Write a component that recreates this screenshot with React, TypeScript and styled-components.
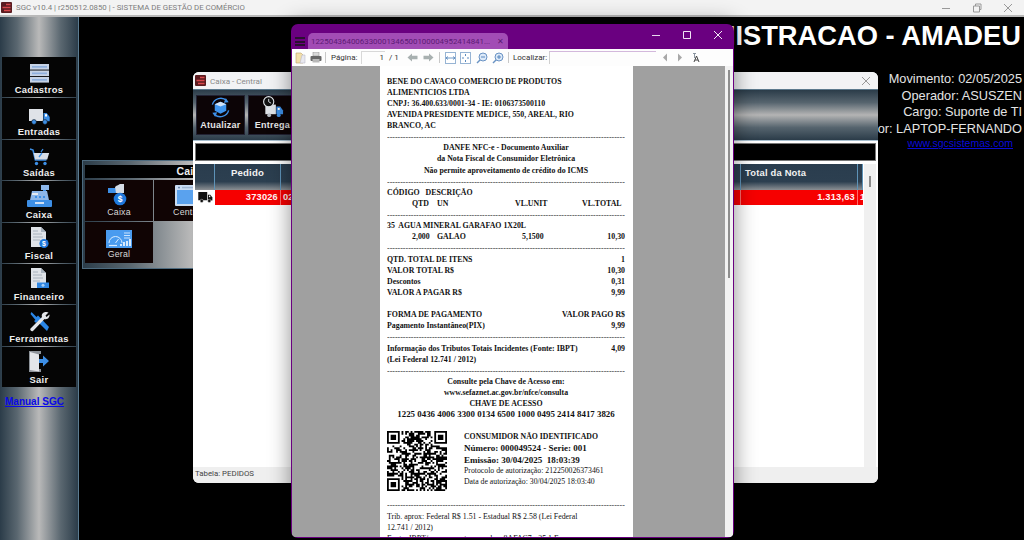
import React from "react";
import styled, { createGlobalStyle } from "styled-components";

const Global = createGlobalStyle`
  html, body { margin: 0; padding: 0; background: #000; overflow: hidden; }
  #root { width: 1024px; height: 540px; }
  * { box-sizing: border-box; }
`;

const UI = `Roboto, "Noto Sans", sans-serif`;
const ARIAL = `"Liberation Sans", Arial, sans-serif`;
const SERIF = `"Liberation Serif", "Times New Roman", serif`;
const METAL_H = `linear-gradient(90deg, #2b3c49 0%, #5a6770 22%, #b9b9b9 50%, #5a6770 78%, #2b3c49 100%)`;
const METAL_V = `linear-gradient(180deg, #2b3c49 0%, #56646e 25%, #b4b4b4 50%, #56646e 75%, #2b3c49 100%)`;
const LH = 11.13;

const Page = styled.div`
  width: 1024px; height: 540px; display: flex; flex-direction: column; overflow: hidden; background: #000;
`;
const AppBar = styled.header`
  height: 17px; flex: none; display: flex; align-items: center; gap: 4px; padding: 0 0 0 1px;
  background: #f3f3f3; border-bottom: 2px solid #b9b9b9;
`;
const AppTitle = styled.span`
  font: 7.85px ${UI}; color: #7c7c7c; flex: 1; white-space: nowrap;
`;
const Controls = styled.div`
  display: flex; align-items: center; gap: 21px; padding-right: 11px; height: 14px;
`;
const WinGlyph = styled.svg<{ $c: string }>`
  width: 10px; height: 10px; stroke: ${(p) => p.$c}; fill: none; stroke-width: 1; display: block;
`;
const Body = styled.div`
  flex: 1; display: flex; min-height: 0;
`;
const Sidebar = styled.nav`
  width: 79px; flex: none; padding: 40px 2px 0 2px; display: flex; flex-direction: column; gap: 1px;
  background: ${METAL_H}; border-right: 1px solid #5b7c92;
`;
const SideBtn = styled.div`
  height: 40.4px; flex: none; background: #050505; display: flex; flex-direction: column; align-items: center;
  justify-content: flex-end; gap: 1px; padding-bottom: 1px;
`;
const SideLabel = styled.span`
  font: bold 9.4px ${ARIAL}; color: #f0f0f0; letter-spacing: 0.3px; line-height: 12px;
`;
const ManualLink = styled.a`
  font: bold 10px ${ARIAL}; color: #0a0ae6; text-decoration: underline; margin: 8px 0 0 3px;
`;
const Desktop = styled.main`
  flex: 1; position: relative; min-width: 0; padding: 4px 2px 0 0; text-align: right; background: #000;
`;
const BigTitle = styled.h1`
  margin: 0 1px 0 0; font: bold 27.3px/30px ${ARIAL}; color: #fff; white-space: nowrap;
`;
const Info = styled.div`
  margin-top: 20px; font: 12.75px/16.6px ${ARIAL}; color: #e4e4e4; white-space: nowrap;
`;
const Site = styled.a`
  display: block; margin-right: 9px; font: 10.5px/13px ${ARIAL}; color: #0a0ad8; text-decoration: underline;
`;

/* Caixa menu panel */
const MenuPanel = styled.section`
  position: absolute; left: 3px; top: 143px; width: 218px; height: 109px; padding: 4px 2px 0;
  background: ${METAL_H}; border: 1px solid #4d6a7e; text-align: left;
`;
const MenuHead = styled.div`
  height: 13px; margin-bottom: 2px; background: #000; color: #eee; font: bold 10.5px/13px ${ARIAL};
  text-align: center; letter-spacing: 0.2px;
`;
const MenuGrid = styled.div`
  display: grid; grid-template-columns: 68px 68px; grid-auto-rows: 41px; gap: 1px;
`;
const MenuBtn = styled.div`
  background: #100404; display: flex; flex-direction: column; align-items: center; justify-content: flex-end;
  padding-bottom: 3px; gap: 1px;
`;
const MenuLabel = styled.span`
  font: 8.8px/11px ${ARIAL}; color: #d8d8d8; letter-spacing: 0.2px;
`;

/* Caixa window */
const CaixaWindow = styled.section`
  position: absolute; left: 114px; top: 55px; width: 685px; height: 411px; display: flex; flex-direction: column;
  background: #fff; border-radius: 6px; overflow: hidden; text-align: left;
`;
const CaixaBar = styled.div`
  height: 17px; flex: none; display: flex; align-items: center; gap: 4px; padding: 0 7px 0 2px; background: #f2f3f5;
`;
const CaixaTitle = styled.span`
  flex: 1; font: 8.1px ${UI}; color: #8a8a8a;
`;
const ToolRow = styled.div`
  height: 52px; flex: none; display: flex; gap: 3px; padding: 5px 3px; background: ${METAL_V}; border-bottom: 1px solid #a8c0d0; border-top: 1px solid #5c7a8e;
`;
const ToolBtn = styled.div`
  width: 49px; background: #0c0406; border: 1px solid #223; display: flex; flex-direction: column; align-items: center; justify-content: flex-end; padding-bottom: 3px; gap: 1px;
`;
const ToolLabel = styled.span`
  font: bold 9px/11px ${ARIAL}; color: #e6e6e6; letter-spacing: 0.25px; white-space: nowrap;
`;
const Strip = styled.div`
  height: 18px; flex: none; margin: 2px 2px 3px; background: #000; border: 1px solid #777;
`;
const GridArea = styled.div`
  flex: 1; min-height: 0; display: flex; padding: 0 2px; background: #fff;
`;
const Table = styled.div`
  flex: 1; min-width: 0; display: flex; flex-direction: column; overflow: hidden;
`;
const TableHead = styled.div`
  height: 26px; flex: none; display: grid; grid-template-columns: 20px 66px 460px 117px 1fr;
  background: linear-gradient(180deg, #2a3d4e 0%, #2c3f50 68%, #8c9094 100%);
`;
const HeadCell = styled.div<{ $left?: boolean }>`
  border-right: 1px solid #5e93b8; color: #f2f2f2; font: bold ${(p) => (p.$left ? "9.4px" : "9.6px")}/18px ${ARIAL};
  text-align: ${(p) => (p.$left ? "left" : "center")}; padding-left: ${(p) => (p.$left ? "4px" : "0")}; letter-spacing: 0.2px;
  white-space: nowrap; overflow: hidden;
`;
const TableRow = styled.div`
  height: 15px; flex: none; display: grid; grid-template-columns: 20px 66px 460px 117px 1fr; background: #f60000;
`;
const IconCell = styled.div`
  background: #fff; display: flex; align-items: center; justify-content: center;
`;
const DataCell = styled.div<{ $right?: boolean }>`
  color: #fff3f3; font: bold 9.3px/15px ${ARIAL}; letter-spacing: 0.2px; border-right: 1px solid #ff6a6a;
  text-align: ${(p) => (p.$right ? "right" : "left")}; padding: 0 2px 0 2px; white-space: nowrap;
`;
const VScroll = styled.div`
  width: 12px; flex: none; background: #f0f0f0; display: flex; justify-content: center; padding-top: 12px; margin-left: 1px;
`;
const VThumb = styled.div`
  width: 2px; height: 11px; background: #8b8b8b;
`;
const CaixaFoot = styled.div`
  height: 16px; flex: none; padding-left: 2px; background: #efefef; font: 7.85px/14px ${UI}; color: #444;
`;

/* PDF viewer */
const PdfWindow = styled.section`
  position: absolute; left: 212px; top: 7px; width: 443px; height: 514px; display: flex; flex-direction: column;
  background: #6a0080; border-radius: 7px; overflow: hidden; padding: 0 1px 1px; text-align: left;
  box-shadow: 0 0 22px rgba(0, 0, 0, 0.45);
`;
const PdfBar = styled.div`
  height: 25px; flex: none; display: flex; align-items: flex-end; position: relative; padding-left: 16px;
`;
const Burger = styled.div`
  position: absolute; left: 3px; top: 13px; width: 10px; height: 9px;
  border-top: 2px solid #2a1030; border-bottom: 2px solid #2a1030;
  &::after { content: ""; display: block; height: 2px; margin-top: 1.5px; background: #2a1030; }
`;
const PdfTab = styled.div`
  width: 200px; height: 16px; background: #a24cb5; border-radius: 5px 5px 0 0; padding: 0 4px 0 3px; display: flex; align-items: center; justify-content: space-between;
  color: #5c1a74; font: 7.9px ${UI}; white-space: nowrap;
`;
const PdfControls = styled.div`
  position: absolute; right: 10px; top: 6px; display: flex; gap: 21px;
`;
const PdfTools = styled.div`
  height: 17px; flex: none; display: flex; align-items: center; background: #fdfdfd; padding-left: 3px;
  font: 8px ${UI}; color: #333; white-space: nowrap;
`;
const Gap = styled.span<{ $w: number }>`
  width: ${(p) => p.$w}px; flex: none;
`;
const Sep = styled.i`
  width: 1px; height: 11px; flex: none; background: #c8c8c8;
`;
const ToolText = styled.span<{ $w: number }>`
  width: ${(p) => p.$w}px; flex: none;
`;
const PageBox = styled.div`
  width: 24px; height: 13px; flex: none; margin-left: 4px; border: 1px solid #d8d8d8; border-right: none; border-bottom: none; text-align: right; line-height: 12px; padding-right: 1px;
`;
const FindBox = styled.div`
  width: 107px; height: 13px; flex: none; margin-left: 4px; border-top: 1px solid #d3b8dc; border-left: 1px solid #d0d0d0;
`;
const PdfBody = styled.div`
  flex: 1; min-height: 0; display: flex; background: #a0a0a0;
`;
const PdfView = styled.div`
  flex: 1; display: flex; justify-content: center; min-width: 0; padding-right: 4px; overflow: hidden;
`;
const PdfScroll = styled.div`
  width: 8px; flex: none; background: #f2f2f2; display: flex; justify-content: center; padding-top: 4px;
`;
const PdfThumb = styled.div`
  width: 2px; height: 208px; background: #8e8e8e;
`;
const Receipt = styled.article`
  width: 253px; flex: none; background: #fff; padding: 9.5px 8px 0 7px; overflow: hidden; color: #111;
  font: bold 7.85px/${LH}px ${SERIF};
`;
const Line = styled.div<{ $center?: boolean; $size?: number; $plain?: boolean; $gap?: number }>`
  height: ${LH}px; white-space: nowrap; text-align: ${(p) => (p.$center ? "center" : "left")};
  font-size: ${(p) => p.$size ?? 7.85}px; font-weight: ${(p) => (p.$plain ? 400 : 700)};
  margin-top: ${(p) => p.$gap ?? 0}px;
`;
const Split = styled(Line)`
  display: flex; justify-content: space-between;
`;
const Dash = styled.div`
  height: ${LH}px; overflow: hidden; white-space: nowrap; font-weight: 400; color: #333; letter-spacing: 0.03px; text-align: left;
`;
const ItemRow = styled.div`
  height: ${LH}px; display: grid; grid-template-columns: 25px 78px 67px 1fr; padding-left: 25px; white-space: nowrap;
`;
const Inset = styled.span<{ $l?: number; $r?: number }>`
  padding-left: ${(p) => p.$l ?? 0}px; padding-right: ${(p) => p.$r ?? 0}px; text-align: ${(p) => (p.$r !== undefined ? "right" : "left")};
`;
const QrBlock = styled.div`
  display: flex; gap: 17px; height: 79px; padding-top: 11px;
`;
const QrText = styled.div`
  min-width: 0;
`;
const QrLine = styled.div<{ $size: number; $plain?: boolean; $h: number }>`
  font-size: ${(p) => p.$size}px; font-weight: ${(p) => (p.$plain ? 400 : 700)}; line-height: ${(p) => p.$h}px; white-space: nowrap;
`;

const BLUE = "#3d8fe6";
const PALE = "#dfe3e8";

const Cad = () => (
  <svg width="19" height="19" viewBox="0 0 19 19">
    {[0, 6.5, 13].map((y) => (
      <g key={y}>
        <rect x="0" y={y} width="19" height="5.6" fill="#c6d3e6" />
        <rect x="2" y={y + 2} width="15" height="1.7" fill="#8fb0dd" />
      </g>
    ))}
  </svg>
);
const TruckI = ({ c = PALE, c2 = BLUE, w = 21 }: { c?: string; c2?: string; w?: number }) => (
  <svg width={w} height={(w * 16) / 21} viewBox="0 0 21 16">
    <rect x="0" y="0" width="14" height="12" fill={c} />
    <path d="M14.5 4h3.2l3 4v4.2h-6.2z" fill={c2} />
    <rect x="16" y="5.2" width="2" height="2.3" fill="#fff" />
    <circle cx="5" cy="13" r="2.4" fill={c2} stroke="#111" strokeWidth=".6" />
    <circle cx="16" cy="13" r="2.4" fill={c2} stroke="#111" strokeWidth=".6" />
  </svg>
);
const Cart = () => (
  <svg width="21" height="18" viewBox="0 0 21 18">
    <path d="M1 1l3 1 2.4 10h11" fill="none" stroke={BLUE} strokeWidth="1.6" />
    <path d="M4.6 5h15.6l-2 6.5H6.2z" fill="#d7dee8" />
    <path d="M12 4l2-3M10 9l3-4" stroke={BLUE} strokeWidth="1.3" />
    <circle cx="7.5" cy="15.5" r="1.7" fill={BLUE} />
    <circle cx="16" cy="15.5" r="1.7" fill={BLUE} />
  </svg>
);
const Register = () => (
  <svg width="25" height="23" viewBox="0 0 25 23">
    <rect x="14" y="0" width="8" height="5" fill="#8db7ea" />
    <rect x="16" y="5" width="3" height="3" fill={BLUE} />
    <path d="M5 6h15l2 9H3z" fill="#8db7ea" />
    <rect x="5" y="8" width="6" height="2" fill="#e6ebf2" />
    <path d="M8 11h2v2H8zM12 11h2v2h-2zM16 11h2v2h-2z" fill={BLUE} />
    <rect x="0" y="15" width="25" height="7" rx="1" fill={BLUE} />
    <rect x="8" y="17" width="9" height="2" fill="#cfe0f5" />
  </svg>
);
const Doc = ({ badge }: { badge: "coin" | "note" }) => (
  <svg width="19" height="22" viewBox="0 0 19 22">
    <path d="M1 0h10l5 5v15H1z" fill={PALE} />
    <path d="M11 0l5 5h-5z" fill="#aab4bf" />
    <path d="M3 7h9M3 10h10M3 13h7M3 4h5" stroke="#9aa6b2" strokeWidth=".8" />
    {badge === "coin" ? (
      <>
        <circle cx="14" cy="16.5" r="4.6" fill="#1f78dc" />
        <text x="14" y="19" textAnchor="middle" fontSize="7" fontWeight="700" fontFamily="Liberation Sans" fill="#fff">$</text>
      </>
    ) : (
      <>
        <rect x="7" y="14.5" width="12" height="5.5" fill="#2f86e2" />
        <circle cx="13" cy="17.2" r="1.5" fill="#a8d0f7" />
      </>
    )}
  </svg>
);
const Tools = () => (
  <svg width="21" height="21" viewBox="0 0 21 21">
    <path d="M2.5 1l5 5 1.5-1.5L11 6.5 20 16l-2 4-9.5-9.5L7 12l-2-2L6.500 9 1.500 3z" fill="#2a86e6" />
    <path d="M19.5 1.500l-3 3 1 1.500 3-2.500c.3 3-2 5.500-5 4.500L4 20c-1.500 1-3.500-1-2.500-2.500L13 6c-1-3 1.500-5.300 4.500-5z" fill="#e3e6ea" />
  </svg>
);
const Door = () => (
  <svg width="20" height="23" viewBox="0 0 20 23">
    <path d="M0 1h12v3h-2v15h2v3H0z" fill="#8d939a" />
    <path d="M1 2l9 2.500v17L1 20z" fill="#e3e6ea" />
    <path d="M10 9h4V5.500l6 5.500-6 5.500V13h-4z" fill={BLUE} />
  </svg>
);
const MoneyHand = () => (
  <svg width="22" height="23" viewBox="0 0 22 23">
    <rect x="0" y="5" width="8" height="5" fill={BLUE} />
    <path d="M7 4c2-2 4-2 5-3h4v9H8z" fill="#d5dce5" />
    <circle cx="12" cy="16" r="6.300" fill="#1f78dc" />
    <text x="12" y="19" textAnchor="middle" fontSize="8.500" fontWeight="700" fontFamily="Liberation Sans" fill="#fff">$</text>
  </svg>
);
const WindowI = () => (
  <svg width="26" height="21" viewBox="0 0 26 21">
    <rect x="0" y="0" width="26" height="21" rx="1" fill="#c9dcf3" />
    <rect x="2" y="5" width="22" height="14" fill="#5aa2ee" />
    <rect x="3" y="1.800" width="2" height="1.500" fill="#6d8bb0" />
    <rect x="7" y="1.800" width="14" height="1.500" fill="#9fb6d2" />
  </svg>
);
const Gauge = () => (
  <svg width="26" height="18" viewBox="0 0 26 18">
    <rect x="0" y="0" width="26" height="18" fill="#4a9bef" />
    <path d="M3 13a6.500 6.500 0 0 1 13 0" fill="none" stroke="#d9ecff" strokeWidth="1" />
    <path d="M9.500 13l3-4" stroke="#d9ecff" strokeWidth="1" />
    <path d="M18 3h6M18 5.500h6M18 8h6" stroke="#d9ecff" strokeWidth=".9" />
    <path d="M3 15.500h8" stroke="#d9ecff" strokeWidth="1.200" />
    <path d="M15 16v-2M18 16v-4M21 16v-5M24 16v-7" stroke="#f2f8ff" strokeWidth="1.700" />
  </svg>
);
const Refresh = () => (
  <svg width="25" height="24" viewBox="0 0 25 24">
    <path d="M4 9a9 9 0 0 1 15-4" fill="none" stroke={BLUE} strokeWidth="1.500" />
    <path d="M21 15a9 9 0 0 1-15 4" fill="none" stroke={BLUE} strokeWidth="1.500" />
    <path d="M18 2l3 4.500-5 .5zM7 22l-3-4.500 5-.5z" fill={BLUE} />
    <path d="M12.500 6l6 2.500v7l-6 3-6-3v-7z" fill="#3f95ee" />
    <path d="M12.500 6l6 2.500-6 2.500-6-2.500z" fill="#cfe3fa" />
  </svg>
);
const ClockTruck = () => (
  <svg width="22" height="24" viewBox="0 0 22 24">
    <rect x="3" y="9" width="11" height="10" fill={PALE} />
    <path d="M14.500 11h4l3 4v4h-7z" fill={BLUE} />
    <rect x="16" y="12.500" width="2" height="2" fill="#fff" />
    <circle cx="7" cy="20" r="2" fill="#b8bec6" />
    <circle cx="17" cy="20" r="2" fill={BLUE} />
    <circle cx="6.500" cy="6" r="5.300" fill="#111" stroke={PALE} strokeWidth="1.200" />
    <path d="M6.500 3v3l2.500 1.500" fill="none" stroke={PALE} strokeWidth="1" />
  </svg>
);
const DarkTruck = () => (
  <svg width="15" height="11" viewBox="0 0 21 16">
    <rect x="0" y="0" width="13" height="12" fill="#111" />
    <path d="M14 4h3.500l3 4v4.500H14z" fill="#111" />
    <rect x="15.500" y="5.200" width="2" height="2.300" fill="#fff" />
    <circle cx="5" cy="13" r="2.400" fill="#111" stroke="#fff" strokeWidth=".6" />
    <circle cx="16" cy="13" r="2.400" fill="#111" stroke="#fff" strokeWidth=".6" />
  </svg>
);
const Logo = () => (
  <svg width="11" height="11" viewBox="0 0 11 11">
    <rect width="11" height="11" rx="1" fill="#5a1c20" />
    <path d="M1.500 5.500h8M5 2.500h4.500M3 8.500h6.500" stroke="#d8484c" strokeWidth="1.300" />
  </svg>
);

const Folder = () => (
  <svg width="11" height="12" viewBox="0 0 11 12">
    <path d="M1 1h5l2 2v8H1z" fill="#f3dfaa" stroke="#bda36a" strokeWidth=".6" />
    <path d="M7 3h3v8H5z" fill="#e8e8f0" stroke="#b0b0c0" strokeWidth=".5" />
  </svg>
);
const Printer = () => (
  <svg width="12" height="11" viewBox="0 0 12 11">
    <rect x="3" y="0" width="6" height="4" fill="#d8d8d8" stroke="#888" strokeWidth=".5" />
    <rect x="0.500" y="4" width="11" height="5" rx="1" fill="#666" />
    <rect x="2.500" y="7" width="7" height="3.500" fill="#b8b8b8" />
  </svg>
);
const ArrowShape = styled.svg<{ $flip?: boolean }>`
  width: 11px; height: 9px; flex: none; transform: scaleX(${(p) => (p.$flip ? -1 : 1)});
`;
const Arrow = ({ flip }: { flip?: boolean }) => (
  <ArrowShape $flip={flip} viewBox="0 0 11 9">
    <path d="M10.500 4.500L6 .5v2.200H.5v3.600H6v2.200z" fill="#a8b0b0" />
  </ArrowShape>
);
const TriShape = styled.svg<{ $flip?: boolean }>`
  width: 6px; height: 9px; flex: none; transform: scaleX(${(p) => (p.$flip ? -1 : 1)});
`;
const Tri = ({ flip }: { flip?: boolean }) => (
  <TriShape $flip={flip} viewBox="0 0 6 9">
    <path d="M1 .5l4 4-4 4z" fill="#a8a8a8" />
  </TriShape>
);
const FitWidth = () => (
  <svg width="11" height="12" viewBox="0 0 11 12">
    <rect x=".5" y=".5" width="10" height="11" fill="#fff" stroke="#97b4d4" />
    <path d="M1 6h9M1 6l2-1.500M1 6l2 1.500M10 6L8 4.500M10 6L8 7.500" stroke="#4a7eb8" strokeWidth=".8" fill="none" />
  </svg>
);
const FitPage = () => (
  <svg width="11" height="12" viewBox="0 0 11 12">
    <rect x=".5" y=".5" width="10" height="11" fill="#fff" stroke="#97b4d4" />
    <path d="M5.500 2v2M5.500 8v2M2 6h2M7 6h2" stroke="#4a7eb8" strokeWidth=".9" />
  </svg>
);
const Zoomer = ({ plus }: { plus?: boolean }) => (
  <svg width="12" height="12" viewBox="0 0 12 12">
    <circle cx="7" cy="5" r="4" fill="#dce9f8" stroke="#6a93c4" />
    <path d="M4 8L1 11" stroke="#6a93c4" strokeWidth="1.500" />
    <path d={plus ? "M5 5h4M7 3v4" : "M5 5h4"} stroke="#4a7eb8" strokeWidth=".9" />
  </svg>
);
const CaseI = () => (
  <svg width="11" height="11" viewBox="0 0 11 11">
    <path d="M2 1.500h3M3.500 1.500V6" stroke="#7f8a96" strokeWidth=".9" />
    <path d="M3 10l2.500-6L8 10M4 8h3" stroke="#444" strokeWidth="1" fill="none" />
  </svg>
);

const QR_N = 33;
function qrCells(): string {
  let seed = 0x2f6e2b1;
  const rnd = () => {
    seed ^= seed << 13;
    seed ^= seed >>> 17;
    seed ^= seed << 5;
    return (seed >>> 0) % 100;
  };
  const finder = (x: number, y: number, ox: number, oy: number) => {
    const dx = x - ox, dy = y - oy;
    if (dx < -1 || dy < -1 || dx > 7 || dy > 7) return null;
    if (dx === -1 || dy === -1 || dx === 7 || dy === 7) return false;
    if (dx === 0 || dy === 0 || dx === 6 || dy === 6) return true;
    if (dx === 1 || dy === 1 || dx === 5 || dy === 5) return false;
    return true;
  };
  let d = "";
  for (let y = 0; y < QR_N; y++) {
    for (let x = 0; x < QR_N; x++) {
      const f = finder(x, y, 0, 0) ?? finder(x, y, QR_N - 7, 0) ?? finder(x, y, 0, QR_N - 7);
      const on = f === null ? rnd() < 56 : f;
      if (on) d += `M${x} ${y}h1v1h-1z`;
    }
  }
  return d;
}
const QR_PATH = qrCells();
const QrSvg = styled.svg`
  width: 60px; height: 60px; flex: none;
`;
const QrCode = () => (
  <QrSvg viewBox={`0 0 ${QR_N} ${QR_N}`}>
    <path d={QR_PATH} fill="#000" />
  </QrSvg>
);

const Dashes = () => <Dash>{"-".repeat(90)}</Dash>;

const sideItems: { label: string; icon: React.ReactNode }[] = [
  { label: "Cadastros", icon: <Cad /> },
  { label: "Entradas", icon: <TruckI /> },
  { label: "Saídas", icon: <Cart /> },
  { label: "Caixa", icon: <Register /> },
  { label: "Fiscal", icon: <Doc badge="coin" /> },
  { label: "Financeiro", icon: <Doc badge="note" /> },
  { label: "Ferramentas", icon: <Tools /> },
  { label: "Sair", icon: <Door /> },
];
const menuItems: { label: string; icon: React.ReactNode }[] = [
  { label: "Caixa", icon: <MoneyHand /> },
  { label: "Central", icon: <WindowI /> },
  { label: "Geral", icon: <Gauge /> },
];

export default function App() {
  return (
    <Page>
      <Global />
      <AppBar>
        <Logo />
        <AppTitle>SGC v10.4 | r250512.0850 | - SISTEMA DE GESTÃO DE COMÉRCIO</AppTitle>
        <Controls>
          <WinGlyph $c="#999" viewBox="0 0 10 10"><path d="M1 5.500h8" /></WinGlyph>
          <WinGlyph $c="#999" viewBox="0 0 10 10"><path d="M1.500 3h6v6h-6zM3.500 3V1h5.500v5.500H7.500" /></WinGlyph>
          <WinGlyph $c="#999" viewBox="0 0 10 10"><path d="M1 1l8 8M9 1l-8 8" /></WinGlyph>
        </Controls>
      </AppBar>
      <Body>
        <Sidebar>
          {sideItems.map((s) => (
            <SideBtn key={s.label}>
              {s.icon}
              <SideLabel>{s.label}</SideLabel>
            </SideBtn>
          ))}
          <ManualLink href="#">Manual SGC</ManualLink>
        </Sidebar>
        <Desktop>
          <BigTitle>ADMINISTRACAO - AMADEU</BigTitle>
          <Info>
            <div>Movimento: 02/05/2025</div>
            <div>Operador: ASUSZEN</div>
            <div>Cargo: Suporte de TI</div>
            <div>Servidor: LAPTOP-FERNANDO</div>
            <Site href="#">www.sgcsistemas.com</Site>
          </Info>

          <MenuPanel>
            <MenuHead>Caixa</MenuHead>
            <MenuGrid>
              {menuItems.map((m) => (
                <MenuBtn key={m.label}>
                  {m.icon}
                  <MenuLabel>{m.label}</MenuLabel>
                </MenuBtn>
              ))}
            </MenuGrid>
          </MenuPanel>

          <CaixaWindow>
            <CaixaBar>
              <Logo />
              <CaixaTitle>Caixa - Central</CaixaTitle>
              <WinGlyph $c="#999" viewBox="0 0 10 10"><path d="M1 1l8 8M9 1l-8 8" /></WinGlyph>
            </CaixaBar>
            <ToolRow>
              <ToolBtn>
                <Refresh />
                <ToolLabel>Atualizar</ToolLabel>
              </ToolBtn>
              <ToolBtn>
                <ClockTruck />
                <ToolLabel>Entrega</ToolLabel>
              </ToolBtn>
            </ToolRow>
            <Strip />
            <GridArea>
              <Table>
                <TableHead>
                  <HeadCell />
                  <HeadCell>Pedido</HeadCell>
                  <HeadCell />
                  <HeadCell $left>Total da Nota</HeadCell>
                  <HeadCell />
                </TableHead>
                <TableRow>
                  <IconCell><DarkTruck /></IconCell>
                  <DataCell $right>373026</DataCell>
                  <DataCell>02/05/2025</DataCell>
                  <DataCell $right>1.313,63</DataCell>
                  <DataCell>1</DataCell>
                </TableRow>
              </Table>
              <VScroll><VThumb /></VScroll>
            </GridArea>
            <CaixaFoot>Tabela: PEDIDOS</CaixaFoot>
          </CaixaWindow>

          <PdfWindow>
            <PdfBar>
              <Burger />
              <PdfTab>
                <span>122504364006330001346500100004952414841...</span>
                <span>✕</span>
              </PdfTab>
              <PdfControls>
                <WinGlyph $c="#e8d8ee" viewBox="0 0 10 10"><path d="M1 5.500h8" /></WinGlyph>
                <WinGlyph $c="#f0e4f4" viewBox="0 0 10 10"><path d="M1.500 1.500h7v7h-7z" /></WinGlyph>
                <WinGlyph $c="#f4ecf6" viewBox="0 0 10 10"><path d="M1 1l8 8M9 1l-8 8" /></WinGlyph>
              </PdfControls>
            </PdfBar>
            <PdfTools>
              <Folder />
              <Gap $w={4} />
              <Printer />
              <Gap $w={3} />
              <Sep />
              <Gap $w={5} />
              <ToolText $w={26}>Página:</ToolText>
              <PageBox>1</PageBox>
              <Gap $w={4} />
              <ToolText $w={10}>/ 1</ToolText>
              <Gap $w={8} />
              <Arrow flip />
              <Gap $w={5} />
              <Arrow />
              <Gap $w={5} />
              <Sep />
              <Gap $w={5} />
              <FitWidth />
              <Gap $w={4} />
              <FitPage />
              <Gap $w={5} />
              <Zoomer />
              <Gap $w={4} />
              <Zoomer plus />
              <Gap $w={4} />
              <Sep />
              <Gap $w={4} />
              <ToolText $w={32}>Localizar:</ToolText>
              <FindBox />
              <Gap $w={6} />
              <Tri flip />
              <Gap $w={9} />
              <Tri />
              <Gap $w={8} />
              <CaseI />
            </PdfTools>
            <PdfBody>
              <PdfView>
                <Receipt>
                  <Line>BENE DO CAVACO COMERCIO DE PRODUTOS</Line>
                  <Line>ALIMENTICIOS LTDA</Line>
                  <Line>CNPJ: 36.400.633/0001-34 - IE: 0106373500110</Line>
                  <Line>AVENIDA PRESIDENTE MEDICE, 550, AREAL, RIO</Line>
                  <Line>BRANCO, AC</Line>
                  <Dashes />
                  <Line $center>DANFE NFC-e - Documento Auxiliar</Line>
                  <Line $center>da Nota Fiscal de Consumidor Eletrônica</Line>
                  <Line $center>Não permite aproveitamento de crédito do ICMS</Line>
                  <Dashes />
                  <Line>CÓDIGO&nbsp;&nbsp; DESCRIÇÃO</Line>
                  <ItemRow>
                    <span>QTD</span><span>UN</span><span>VL.UNIT</span><Inset $r={4}>VL.TOTAL</Inset>
                  </ItemRow>
                  <Dashes />
                  <Line>35&nbsp; AGUA MINERAL GARAFAO 1X20L</Line>
                  <ItemRow>
                    <span>2,000</span><span>GALAO</span><Inset $l={7}>5,1500</Inset><Inset $r={0}>10,30</Inset>
                  </ItemRow>
                  <Dashes />
                  <Split><span>QTD. TOTAL DE ITENS</span><span>1</span></Split>
                  <Split><span>VALOR TOTAL R$</span><span>10,30</span></Split>
                  <Split><span>Descontos</span><span>0,31</span></Split>
                  <Split><span>VALOR A PAGAR R$</span><span>9,99</span></Split>
                  <Split $gap={LH}><span>FORMA DE PAGAMENTO</span><span>VALOR PAGO R$</span></Split>
                  <Split><span>Pagamento Instantâneo(PIX)</span><span>9,99</span></Split>
                  <Dashes />
                  <Split><span>Informação dos Tributos Totais Incidentes (Fonte: IBPT)</span><span>4,09</span></Split>
                  <Line>(Lei Federal 12.741 / 2012)</Line>
                  <Dashes />
                  <Line $center>Consulte pela Chave de Acesso em:</Line>
                  <Line $center>www.sefaznet.ac.gov.br/nfce/consulta</Line>
                  <Line $center>CHAVE DE ACESSO</Line>
                  <Line $center $size={8.9}>1225 0436 4006 3300 0134 6500 1000 0495 2414 8417 3826</Line>
                  <QrBlock>
                    <QrCode />
                    <QrText>
                      <QrLine $size={7.75} $h={11}>CONSUMIDOR NÃO IDENTIFICADO</QrLine>
                      <QrLine $size={9} $h={12}>Número: 000049524 - Serie: 001</QrLine>
                      <QrLine $size={9} $h={12}>Emissão: 30/04/2025&nbsp; 18:03:39</QrLine>
                      <QrLine $size={7.77} $h={10.5} $plain>Protocolo de autorização: 212250026373461</QrLine>
                      <QrLine $size={7.77} $h={10.5} $plain>Data de autorização: 30/04/2025 18:03:40</QrLine>
                    </QrText>
                  </QrBlock>
                  <Dashes />
                  <Line $plain>Trib. aprox: Federal R$ 1.51 - Estadual R$ 2.58 (Lei Federal</Line>
                  <Line $plain>12.741 / 2012)</Line>
                  <Line $plain>Fonte: IBPT/empresometro.com.br - 8AFAC7 - 25.1.F</Line>
                </Receipt>
              </PdfView>
              <PdfScroll><PdfThumb /></PdfScroll>
            </PdfBody>
          </PdfWindow>
        </Desktop>
      </Body>
    </Page>
  );
}
